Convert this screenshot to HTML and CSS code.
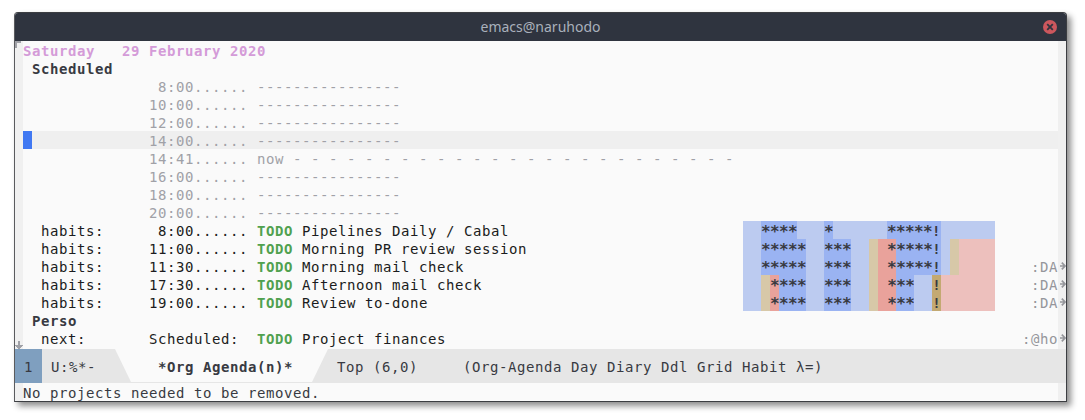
FILE: index.html
```html
<!DOCTYPE html>
<html lang="en">
<head>
<meta charset="utf-8">
<title>emacs@naruhodo</title>
<link rel="stylesheet" href="styles.css">
</head>
<body>
<div class="window">
  <header class="titlebar">
    <span class="title">emacs@naruhodo</span>
    <svg class="close" width="14" height="14" viewBox="0 0 14 14"><circle cx="7" cy="7" r="7" fill="#cc575d"/><path d="M4.2 4.2l5.6 5.6M9.8 4.2l-5.6 5.6" stroke="#2f343f" stroke-width="1.8"/></svg>
  </header>
  <main class="buffer">
    <div class="fringe left">
      <svg width="8" height="8" viewBox="0 0 8 8"><path d="M0 0h6v2H2v5H0z" fill="#a0a1a7"/></svg>
      <svg width="8" height="8" viewBox="0 0 8 8"><path d="M3 0h2v4h3v1H7v1H6v1H5v1H3V7H2V6H1V5H0V4h3z" fill="#a0a1a7"/></svg>
    </div>
    <div class="lines">
      <div class="line date">Saturday   29 February 2020</div>
      <div class="line head"> Scheduled</div>
      <div class="line grid">               8:00...... ----------------</div>
      <div class="line grid">              10:00...... ----------------</div>
      <div class="line grid">              12:00...... ----------------</div>
      <div class="line grid current"><span class="cursor"> </span>             14:00...... ----------------</div>
      <div class="line grid">              14:41...... now - - - - - - - - - - - - - - - - - - - - - - - - -</div>
      <div class="line grid">              16:00...... ----------------</div>
      <div class="line grid">              18:00...... ----------------</div>
      <div class="line grid">              20:00...... ----------------</div>
      <div class="line"><span class="entry">  habits:      8:00...... <b class="todo">TODO</b> Pipelines Daily / Cabal</span><span class="habit"><i class="clear">  </i><i class="ready"><s>****</s></i><i class="clear">   </i><i class="ready"><s>*</s></i><i class="clear">      </i><i class="ready"><s>*****</s>!</i><i class="clear">      </i></span></div>
      <div class="line"><span class="entry">  habits:     11:00...... <b class="todo">TODO</b> Morning PR review session</span><span class="habit"><i class="clear">  </i><i class="ready"><s>*****</s></i><i class="clear">  </i><i class="ready"><s>***</s></i><i class="clear">  </i><i class="alert"> </i><i class="overdue"> <s>*</s></i><i class="ready"><s>****</s>!</i><i class="clear"> </i><i class="alert"> </i><i class="late">    </i></span></div>
      <div class="line"><span class="entry">  habits:     11:30...... <b class="todo">TODO</b> Morning mail check</span><span class="habit"><i class="clear">  </i><i class="ready"><s>*****</s></i><i class="clear">  </i><i class="ready"><s>***</s></i><i class="clear">  </i><i class="alert"> </i><i class="overdue"> <s>*</s></i><i class="ready"><s>****</s>!</i><i class="clear"> </i><i class="alert"> </i><i class="late">    </i></span><span class="tag">:DA</span></div>
      <div class="line"><span class="entry">  habits:     17:30...... <b class="todo">TODO</b> Afternoon mail check</span><span class="habit"><i class="clear">  </i><i class="alert"> </i><i class="overdue"><s>*</s></i><i class="ready"><s>***</s></i><i class="clear">  </i><i class="ready"><s>***</s></i><i class="clear">  </i><i class="alert"> </i><i class="overdue"> <s>*</s></i><i class="ready"><s>**</s></i><i class="clear">  </i><i class="today">!</i><i class="late">      </i></span><span class="tag">:DA</span></div>
      <div class="line"><span class="entry">  habits:     19:00...... <b class="todo">TODO</b> Review to-done</span><span class="habit"><i class="clear">  </i><i class="alert"> </i><i class="overdue"><s>*</s></i><i class="ready"><s>***</s></i><i class="clear">  </i><i class="ready"><s>***</s></i><i class="clear">  </i><i class="alert"> </i><i class="overdue"> <s>*</s></i><i class="ready"><s>**</s></i><i class="clear">  </i><i class="today">!</i><i class="late">      </i></span><span class="tag">:DA</span></div>
      <div class="line head"> Perso</div>
      <div class="line"><span class="entry">  next:       Scheduled:  <b class="todo">TODO</b> Project finances</span><span class="tag">:@ho</span></div>
    </div>
    <div class="fringe right">
      <svg width="8" height="8" viewBox="0 0 8 8"><path d="M2 4h5M3.8 .7l3.3 3.3-3.3 3.3" class="arrow"/></svg>
      <svg width="8" height="8" viewBox="0 0 8 8"><path d="M2 4h5M3.8 .7l3.3 3.3-3.3 3.3" class="arrow"/></svg>
      <svg width="8" height="8" viewBox="0 0 8 8"><path d="M2 4h5M3.8 .7l3.3 3.3-3.3 3.3" class="arrow"/></svg>
      <svg class="last" width="8" height="8" viewBox="0 0 8 8"><path d="M2 4h5M3.8 .7l3.3 3.3-3.3 3.3" class="arrow"/></svg>
    </div>
  </main>
  <div class="modeline">
    <span class="number">1</span>
    <span class="state">U:%*-</span>
    <span class="name">*Org Agenda(n)*</span>
    <span class="position">Top (6,0)     (Org-Agenda Day Diary Ddl Grid Habit λ=)</span>
  </div>
  <footer class="echo"><span>No projects needed to be removed.</span></footer>
</div>
</body>
</html>
```
FILE: styles.css
```css
* { box-sizing: border-box; }
body {
  margin: 0;
  padding: 12px 18px 18px 14px;
  background: #fff;
}
.window {
  width: 1053px;
  height: 390px;
  border: 1px solid #3c3e42;
  border-left-color: #5a5b5e;
  border-radius: 4px 4px 0 0;
  background: #fafafa;
  box-shadow: 4px 4px 6px rgba(0, 0, 0, .45);
  font: 14px/18px "DejaVu Sans Mono", monospace;
  letter-spacing: .572px;
  font-variant-ligatures: none;
  color: #383a42;
  display: flex;
  flex-direction: column;
}
.titlebar {
  height: 28px;
  background: #2f343f;
  border-radius: 3px 3px 0 0;
  display: grid;
  grid-template-columns: 50px 1fr 50px;
  align-items: center;
  font: 14px/28px "Noto Sans", sans-serif;
  letter-spacing: 0;
  color: #a9b0bb;
}
.title { grid-column: 2; text-align: center; }
.close { justify-self: end; margin-right: 9px; }
.buffer { height: 308px; display: flex; }
.fringe {
  width: 8px;
  background: #f0f0f0;
  display: flex;
  flex-direction: column;
}
.fringe.left { justify-content: space-between; }
.fringe.right { padding-top: 221px; gap: 10px; }
.fringe.right .last { margin-top: 18px; }
.arrow { fill: none; stroke: #95969b; stroke-width: 1.7; }
.lines { width: 1035px; }
.line {
  height: 18px;
  line-height: 20px;
  white-space: pre;
  display: flex;
  color: #1b1c20;
}
.date { color: #d49bd8; font-weight: bold; }
.head { color: #383a42; font-weight: bold; }
.line.grid { color: #a0a1a7; }
.current { background: #efefef; }
.cursor { width: 9px; background: #4078f2; }
.entry { width: 720px; }
.todo { color: #50a14f; }
.habit { display: flex; color: #383a42; font-weight: bold; }
.habit i { font-style: normal; height: 18px; }
.habit s {
  display: inline-block;
  height: 18px;
  vertical-align: top;
  font-size: 16px;
  line-height: 22px;
  letter-spacing: -.632px;
  text-decoration: none;
}
.clear { background: #bccbf0; }
.ready { background: #9ab3f2; }
.alert { background: #d7c8a8; }
.overdue { background: #e9a29b; }
.late { background: #edc0bd; }
.today { background: #c3a972; }
.tag { margin-left: auto; color: #95969b; }
.modeline {
  height: 34px;
  background: #e6e6e6;
  display: flex;
  line-height: 36px;
  white-space: pre;
}
.number { width: 27px; padding-left: 9px; background: #7f9fbf; }
.state { width: 73px; padding-left: 9px; }
.name {
  width: 213px;
  height: 33px;
  padding-left: 43px;
  background: #fafafa;
  clip-path: polygon(0 0, 100% 0, 197px 100%, 16px 100%);
  font-weight: bold;
}
.position { padding-left: 9px; }
.echo {
  height: 18px;
  display: flex;
  line-height: 20px;
  padding-left: 8px;
  background: linear-gradient(90deg, #f0f0f0 8px, #fafafa 8px, #fafafa 1043px, #f0f0f0 1043px);
}
```
